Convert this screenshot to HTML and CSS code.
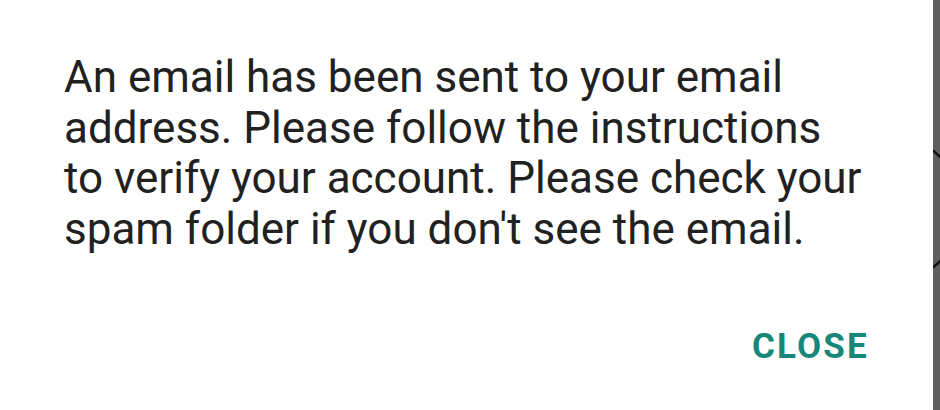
FILE: index.html
```
<!DOCTYPE html>
<html lang="en">

<head>
	<meta charset="UTF-8">
	<meta name="viewport" content="width=device-width, initial-scale=1.0">
	<title>Verify email</title>
	<link rel="stylesheet" href="styles.css">
</head>

<body>
	<section class="screen">
		<!-- the page behind the dim layer, only its edge shows -->
		<svg class="behind" width="200" height="200" viewBox="0 0 200 200">
			<circle cx="100" cy="100" r="73" fill="none" stroke="#111" stroke-width="2.5" />
		</svg>
		<div class="dialog">
			<p class="message">An email has been sent to your email<br>
				address. Please follow the instructions<br>
				to verify your account. Please check your<br>
				spam folder if you don't see the email.</p>
			<div class="actions">
				<a class="btn">CLOSE</a>
			</div>
		</div>
	</section>
</body>

</html>
```
FILE: styles.css
```
* {
	margin: 0;
	padding: 0;
}

html,
body {
	width: 100%;
	height: 100%;
}

body {
	background: #5f5f5f;
	font-family: Roboto, "Noto Sans", sans-serif;
	overflow: hidden;
}

.screen {
	position: relative;
	display: flex;
	height: 100%;
	overflow: hidden;
}

.behind {
	position: absolute;
	left: 789px;
	top: 109px;
}

.dialog {
	position: relative;
	display: flex;
	flex-direction: column;
	justify-content: space-between;
	box-sizing: border-box;
	width: 933px;
	height: 100%;
	padding: 52px 0 46px 64px;
	background: #fff;
}

.message {
	margin-right: 40px;
	font-size: 44px;
	line-height: 50.7px;
	color: #212121;
	white-space: nowrap;
}

.actions {
	display: flex;
	justify-content: flex-end;
	margin-right: 64px;
}

.btn {
	font-size: 35px;
	line-height: 35px;
	font-weight: 700;
	color: #17877a;
	letter-spacing: 2.2px;
}
```
